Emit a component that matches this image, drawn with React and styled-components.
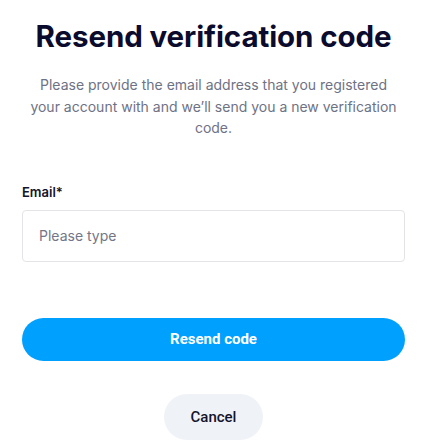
import React, { useState } from "react";
import styled, { createGlobalStyle } from "styled-components";

const GlobalStyle = createGlobalStyle`
  * { box-sizing: border-box; }
  body {
    margin: 0;
    background: #ffffff;
    font-family: "Inter", "Roboto", "Liberation Sans", sans-serif;
  }
`;

const Panel = styled.div`
  width: 383px;
  margin-left: 22px;
  padding-top: 16px;
  display: flex;
  flex-direction: column;
`;

const Title = styled.h1`
  margin: 0;
  text-align: center;
  font-size: 29.5px;
  line-height: 40px;
  font-weight: 700;
  color: #0b0b2e;
  letter-spacing: -0.1px;
`;

const Intro = styled.p`
  margin: 18px 6px 0;
  text-align: center;
  font-size: 14px;
  line-height: 21.5px;
  font-weight: 400;
  color: #6e7285;
`;

const Field = styled.div`
  margin-top: 45px;
  display: flex;
  flex-direction: column;
  gap: 10px;
`;

const Label = styled.label`
  font-size: 13px;
  font-weight: 600;
  color: #14142b;
`;

const Input = styled.input`
  height: 52px;
  width: 100%;
  border: 1px solid #e3e4e8;
  border-radius: 4px;
  padding: 0 16px;
  font-family: inherit;
  font-size: 14px;
  color: #14142b;
  outline: none;
  &::placeholder { color: #737687; }
`;

const Button = styled.button`
  border: none;
  border-radius: 999px;
  font-family: "Roboto", "Inter", sans-serif;
  cursor: pointer;
  background: ${(p) => (p.$primary ? "#00a0ff" : "#eff2f7")};
  color: ${(p) => (p.$primary ? "#ffffff" : "#14142b")};
  font-weight: ${(p) => (p.$primary ? 700 : 500)};
  font-size: 15px;
  height: ${(p) => (p.$primary ? "43px" : "46px")};
  width: ${(p) => (p.$primary ? "100%" : "99px")};
`;

const Actions = styled.div`
  margin-top: 56px;
  display: flex;
  flex-direction: column;
  align-items: center;
  gap: 33px;
`;

export default function App() {
  const [email, setEmail] = useState("");
  return (
    <>
      <GlobalStyle />
      <Panel>
        <Title>Resend verification code</Title>
        <Intro>
          Please provide the email address that you registered your account with and
          we’ll send you a new verification code.
        </Intro>
        <Field>
          <Label htmlFor="email">Email*</Label>
          <Input
            id="email"
            placeholder="Please type"
            value={email}
            onChange={(e) => setEmail(e.target.value)}
          />
        </Field>
        <Actions>
          <Button $primary>Resend code</Button>
          <Button>Cancel</Button>
        </Actions>
      </Panel>
    </>
  );
}
